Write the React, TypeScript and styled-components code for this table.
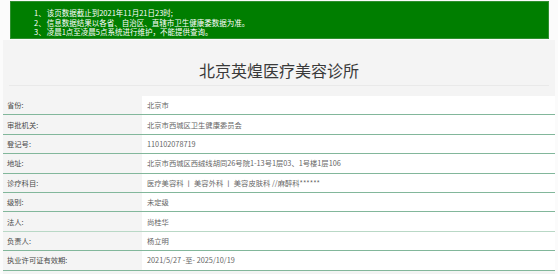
import React from "react";
import styled, { createGlobalStyle } from "styled-components";

const GlobalStyle = createGlobalStyle`
  body {
    margin: 0;
    background: #fbfbfb;
    font-family: "Noto Sans CJK SC", "Liberation Sans", sans-serif;
  }
`;

const Page = styled.div`
  width: 558px;
  height: 274px;
  overflow: hidden;
  display: flex;
  flex-direction: column;
`;

const Notice = styled.ol`
  margin: 1px 9px 0 10px;
  height: 38px;
  box-sizing: border-box;
  padding: 6px 0 0 23px;
  background: #007e00;
  border: 1px solid #2f8f2f;
  color: #ffffff;
  font-size: 7.5px;
  line-height: 9.6px;
  list-style: none;
`;

const NoticeItem = styled.li`
  display: flex;
`;

const NoticeNum = styled.span`
  flex: none;
  margin-right: 1px;
`;

const Panel = styled.div`
  flex: 1;
  margin: 1px 3px 0 3px;
  background: #f4f4f4;
  display: flex;
  flex-direction: column;
`;

const Title = styled.h1`
  margin: 0 6px;
  height: 46px;
  box-sizing: border-box;
  padding-top: 20px;
  border-bottom: 1px solid #e9e9e9;
  font-size: 16px;
  line-height: 20px;
  font-weight: normal;
  color: #3a3a3a;
  text-align: center;
`;

const Table = styled.div`
  margin-top: 10px;
  display: grid;
  grid-template-columns: 139px 1fr;
`;

const Cell = styled.div<{ $label?: boolean; $soft?: boolean }>`
  height: 19.4px;
  box-sizing: border-box;
  display: flex;
  align-items: center;
  padding-left: ${(p) => (p.$label ? "4px" : "5px")};
  background: ${(p) => (p.$label ? "#f4f4f4" : "#ffffff")};
  border-bottom: 1px solid ${(p) => (p.$soft ? "#b9d8c6" : "#82b79b")};
  color: ${(p) => (p.$label ? "#4a4a4a" : "#666666")};
  font-size: 7.3px;
  white-space: nowrap;
  overflow: hidden;
`;

const notes = [
  "该页数据截止到2021年11月21日23时;",
  "信息数据结果以各省、自治区、直辖市卫生健康委数据为准。",
  "凌晨1点至凌晨5点系统进行维护，不能提供查询。",
];

const rows: [string, string][] = [
  ["省份:", "北京市"],
  ["审批机关:", "北京市西城区卫生健康委员会"],
  ["登记号:", "110102078719"],
  ["地址:", "北京市西城区西绒线胡同26号院1-13号1层03、1号楼1层106"],
  ["诊疗科目:", "医疗美容科 丨 美容外科 丨 美容皮肤科 //麻醉科******"],
  ["级别:", "未定级"],
  ["法人:", "尚桂华"],
  ["负责人:", "杨立明"],
  ["执业许可证有效期:", "2021/5/27 -至- 2025/10/19"],
];

export default function App() {
  return (
    <>
      <GlobalStyle />
      <Page>
        <Notice>
          {notes.map((t, i) => (
            <NoticeItem key={i}>
              <NoticeNum>{i + 1}、</NoticeNum>
              {t}
            </NoticeItem>
          ))}
        </Notice>
        <Panel>
          <Title>北京英煌医疗美容诊所</Title>
          <Table>
            {rows.map(([k, v], i) => (
              <React.Fragment key={k}>
                <Cell $label $soft={i === 6}>
                  {k}
                </Cell>
                <Cell $soft={i === 6}>{v}</Cell>
              </React.Fragment>
            ))}
          </Table>
        </Panel>
      </Page>
    </>
  );
}
